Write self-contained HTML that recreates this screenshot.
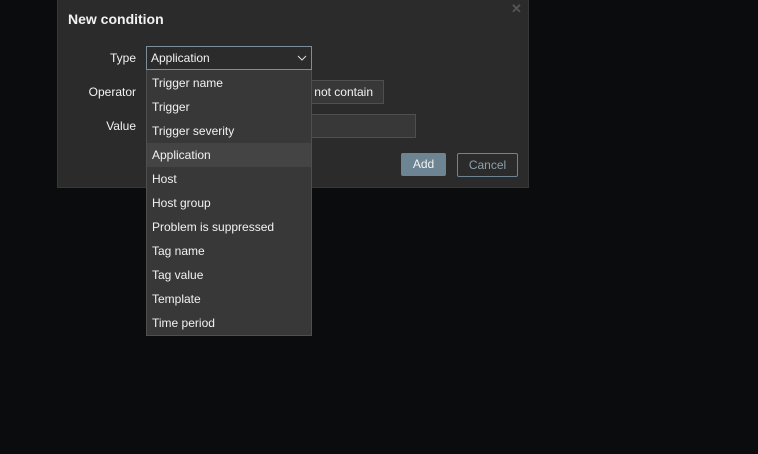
<!DOCTYPE html><html><head><style>
body{margin:0;width:758px;height:454px;background:#0b0c0e;font-family:"Liberation Sans",Arial,sans-serif;font-size:12px;color:#f2f2f2;position:relative;overflow:hidden}
.d{position:absolute;left:57px;top:-1px;width:470px;height:187px;background:#2b2b2b;border:1px solid #383838}
.a{position:absolute}
.lbl{position:absolute;text-align:right;width:80px;color:#f2f2f2}
.dd{position:absolute;left:146px;top:70px;width:164px;height:265px;background:#383838;border:1px solid #4f4f4f;border-top:none}
.dd div{height:24px;line-height:24px;padding-left:5px}
</style></head><body>
<div class="d"></div>
<div class="a" style="left:68px;top:11px;font-size:14px;font-weight:bold;color:#f2f2f2">New condition</div>
<div class="a" style="left:511px;top:1px;font-size:13px;color:#555;font-weight:bold">✕</div>
<div class="lbl" style="left:56px;top:51px">Type</div>
<div class="lbl" style="left:56px;top:85px">Operator</div>
<div class="lbl" style="left:56px;top:119px">Value</div>
<div class="a" style="left:146px;top:46px;width:164px;height:22px;background:#2b2b2b;border:1px solid #7b8e99;line-height:22px"><span style="padding-left:4px">Application</span>
<svg style="position:absolute;right:4px;top:8px" width="10" height="6"><path d="M1 1L5 5L9 1" stroke="#ddd" fill="none"/></svg></div>
<div class="a" style="left:290px;top:80px;width:92px;height:22px;background:#383838;border:1px solid #4f4f4f;line-height:22px;text-align:right"><span style="padding-right:10px">not contain</span></div>
<div class="a" style="left:300px;top:114px;width:114px;height:22px;background:#383838;border:1px solid #4f4f4f"></div>
<div class="a" style="left:401px;top:153px;width:45px;height:23px;background:#6d8592;border-radius:2px;line-height:23px;text-align:center">Add</div>
<div class="a" style="left:457px;top:153px;width:59px;height:22px;border:1px solid #6d8592;border-radius:2px;line-height:22px;text-align:center;color:#8aa0ab">Cancel</div>
<div class="dd"><div style="height:1px"></div>
<div>Trigger name</div><div>Trigger</div><div>Trigger severity</div><div style="background:#444">Application</div><div>Host</div><div>Host group</div><div>Problem is suppressed</div><div>Tag name</div><div>Tag value</div><div>Template</div><div>Time period</div>
</div>
</body></html>
